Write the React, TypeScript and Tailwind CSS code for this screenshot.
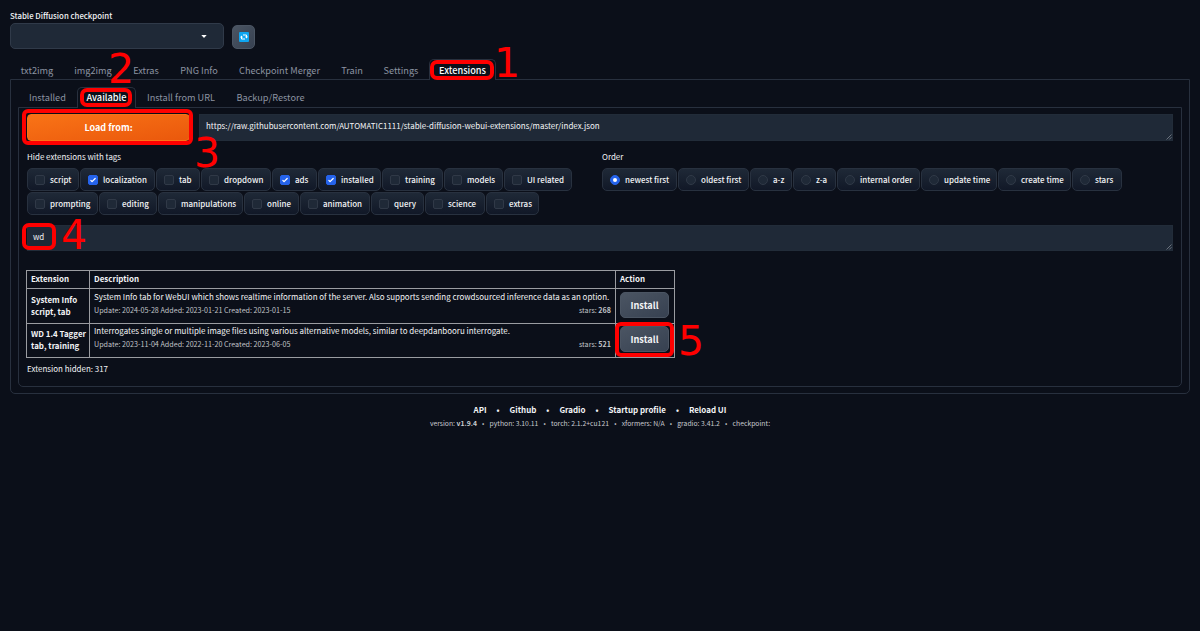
import * as React from "react";
import { clsx } from "clsx";

interface TabItem {
  label: string;
  width: string;
}

interface Option {
  label: string;
  width: string;
  checked?: boolean;
}

const MAIN_TABS: TabItem[] = [
  { label: "txt2img", width: "w-[54px]" },
  { label: "img2img", width: "w-[58px]" },
  { label: "Extras", width: "w-[48px]" },
  { label: "PNG Info", width: "w-[58px]" },
  { label: "Checkpoint Merger", width: "w-[103px]" },
  { label: "Train", width: "w-[42px]" },
  { label: "Settings", width: "w-[56px]" },
  { label: "Extensions", width: "w-[67px]" },
];

const SUB_TABS: TabItem[] = [
  { label: "Installed", width: "w-[59px]" },
  { label: "Available", width: "w-[59px]" },
  { label: "Install from URL", width: "w-[90px]" },
  { label: "Backup/Restore", width: "w-[89px]" },
];

const TAG_ROWS: Option[][] = [
  [
    { label: "script", width: "w-[52px]" },
    { label: "localization", width: "w-[75px]", checked: true },
    { label: "tab", width: "w-[44px]" },
    { label: "dropdown", width: "w-[70px]" },
    { label: "ads", width: "w-[45px]", checked: true },
    { label: "installed", width: "w-[63px]", checked: true },
    { label: "training", width: "w-[61px]" },
    { label: "models", width: "w-[59px]" },
    { label: "UI related", width: "w-[68px]" },
  ],
  [
    { label: "prompting", width: "w-[71px]" },
    { label: "editing", width: "w-[58px]" },
    { label: "manipulations", width: "w-[85px]" },
    { label: "online", width: "w-[55px]" },
    { label: "animation", width: "w-[70px]" },
    { label: "query", width: "w-[53px]" },
    { label: "science", width: "w-[60px]" },
    { label: "extras", width: "w-[53px]" },
  ],
];

const ORDER: Option[] = [
  { label: "newest first", width: "w-[75px]", checked: true },
  { label: "oldest first", width: "w-[71px]" },
  { label: "a-z", width: "w-[42px]" },
  { label: "z-a", width: "w-[43px]" },
  { label: "internal order", width: "w-[83px]" },
  { label: "update time", width: "w-[76px]" },
  { label: "create time", width: "w-[73px]" },
  { label: "stars", width: "w-[50px]" },
];

const EXTENSIONS = [
  {
    name: "System Info",
    tags: "script, tab",
    description:
      "System Info tab for WebUI which shows realtime information of the server. Also supports sending crowdsourced inference data as an option.",
    dates: "Update: 2024-05-28 Added: 2023-01-21 Created: 2023-01-15",
    stars: 268,
  },
  {
    name: "WD 1.4 Tagger",
    tags: "tab, training",
    description:
      "Interrogates single or multiple image files using various alternative models, similar to deepdanbooru interrogate.",
    dates: "Update: 2023-11-04 Added: 2022-11-20 Created: 2023-06-05",
    stars: 521,
  },
];

// Red outlines and step numbers drawn over the page
const OUTLINES = [
  "left-[430px] top-[60px] h-[20px] w-[64px] rounded-[7px]",
  "left-[80px] top-[88px] h-[19px] w-[52px] rounded-[7px]",
  "left-[22px] top-[109px] h-[36px] w-[171px] rounded-[6px]",
  "left-[22px] top-[223px] h-[27px] w-[34px] rounded-[7px]",
  "left-[615px] top-[322px] h-[35px] w-[59px] rounded-[6px]",
];

const STEPS = [
  { n: 1, pos: "left-[494px] top-[43px]" },
  { n: 2, pos: "left-[108px] top-[49px]" },
  { n: 3, pos: "left-[194px] top-[133px]" },
  { n: 4, pos: "left-[61px] top-[215px]" },
  { n: 5, pos: "left-[678px] top-[321px]" },
];

function Tabs({ items, active, className }: { items: TabItem[]; active: string; className?: string }) {
  return (
    <div className={clsx("relative z-10 -mb-px flex h-[21px] text-[9.2px]", className)}>
      {items.map(({ label, width }) => (
        <div
          key={label}
          className={clsx(
            "flex shrink-0 items-center justify-center rounded-t-[5px] border border-b-0",
            width,
            label === active
              ? "border-[#28303e] bg-[#0b0f19] font-medium text-white"
              : "border-transparent text-[#8b93a1]"
          )}
        >
          {label}
        </div>
      ))}
    </div>
  );
}

function Chip({ option, radio = false }: { option: Option; radio?: boolean }) {
  return (
    <div
      className={clsx(
        "flex h-[23px] shrink-0 items-center gap-[5px] rounded-[5px] border border-[#28313f] bg-linear-to-b from-[#1f2937] to-[#111827] pl-[7px] font-medium",
        option.width
      )}
    >
      <span
        className={clsx(
          "flex size-[10px] shrink-0 items-center justify-center border",
          radio ? "rounded-full" : "rounded-[2px]",
          option.checked ? "border-[#2563eb] bg-[#2563eb]" : "border-[#303947] bg-[#1f2937]"
        )}
      >
        {option.checked && radio && <span className="size-[4px] rounded-full bg-white" />}
        {option.checked && !radio && (
          <svg viewBox="0 0 16 16" className="size-[10px] shrink-0" fill="white">
            <path d="M12.2 4.8a1 1 0 0 1 0 1.4l-5 5a1 1 0 0 1-1.4 0l-2-2a1 1 0 0 1 1.4-1.4l1.3 1.3 4.3-4.3a1 1 0 0 1 1.4 0z" />
          </svg>
        )}
      </span>
      <span>{option.label}</span>
    </div>
  );
}

function TextBox({ children, className }: { children: React.ReactNode; className?: string }) {
  return (
    <div
      className={clsx(
        "relative flex items-center border border-[#222c39] bg-[#1f2937] pb-[3px]",
        className
      )}
    >
      {children}
      <svg
        viewBox="0 0 6 6"
        className="absolute right-0 bottom-0 size-[6px]"
        stroke="#8b929c"
        strokeWidth="0.7"
      >
        <path d="M0.5 5.5l5-5M3.2 5.5l2.3-2.3" />
      </svg>
    </div>
  );
}

function InstallButton() {
  return (
    <button className="-mt-[2px] flex h-[26px] w-[49px] items-center justify-center rounded-[5px] border border-[#4b5563] bg-linear-to-br from-[#4b5563] to-[#374151] text-[9.2px] font-bold">
      Install
    </button>
  );
}

function Links({ items, className }: { items: React.ReactNode[]; className?: string }) {
  return (
    <div className={clsx("flex justify-center", className)}>
      {items.map((item, i) => (
        <React.Fragment key={i}>
          {i > 0 && <span>•</span>}
          <span>{item}</span>
        </React.Fragment>
      ))}
    </div>
  );
}

export default function App() {
  return (
    <div className="relative h-[631px] w-[1200px] overflow-hidden bg-[#0b0f19] px-[10px] font-['Noto_Sans_CJK_JP',sans-serif] text-[7.96px] leading-[12px] whitespace-nowrap text-[#f3f4f6]">
      <div className="flex h-[58px] gap-[8px] pt-[10px]">
        <div className="w-[214px]">
          <div className="h-[13px] text-[7.8px] font-medium">Stable Diffusion checkpoint</div>
          <div className="flex h-[26px] items-center justify-end rounded-[5px] border border-[#303a49] bg-[#1f2937] pr-[16px]">
            <svg viewBox="0 0 6 3" className="h-[3px] w-[6px]" fill="white">
              <path d="M0.3 0h5.4L3 3z" />
            </svg>
          </div>
        </div>
        <div className="mt-[15px] flex h-[24px] w-[23px] items-center justify-center rounded-[5px] border border-[#4b5563] bg-linear-to-br from-[#4b5563] to-[#374151]">
          <svg viewBox="0 0 20 20" className="size-[10px]" fill="none" stroke="white" strokeWidth="2">
            <rect width="20" height="20" rx="2" fill="#0ea5f0" stroke="none" />
            <path d="M8 6h7v4M12 14H5v-4" />
            <path d="M12 9h6l-3 4zM2 11h6L5 7z" fill="white" stroke="none" />
          </svg>
        </div>
      </div>

      <Tabs items={MAIN_TABS} active="Extensions" className="mt-px" />

      <div className="h-[315px] rounded-b-[5px] border border-[#28303e] px-[7px] pt-[7px]">
        <Tabs items={SUB_TABS} active="Available" className="[&>div]:pb-[2px]" />

        <div className="flex h-[280px] flex-col rounded-b-[5px] border border-[#28303e] px-[8px] pt-[6px]">
          <div className="flex h-[27px] gap-[9px]">
            <button className="flex w-[163px] items-center justify-center rounded-[4px] border border-[#f97316] bg-linear-to-br from-[#f97316] to-[#ea580c] text-[9px] font-bold text-white">
              Load from:
            </button>
            <TextBox className="flex-1 pl-[6px]">
              https://raw.githubusercontent.com/AUTOMATIC1111/stable-diffusion-webui-extensions/master/index.json
            </TextBox>
          </div>

          <div className="mt-[10px] flex h-[65px]">
            <div className="w-[575px]">
              <div className="h-[17px]">Hide extensions with tags</div>
              {TAG_ROWS.map((row, i) => (
                <div key={i} className="mb-px flex gap-px">
                  {row.map((option) => (
                    <Chip key={option.label} option={option} />
                  ))}
                </div>
              ))}
            </div>
            <div>
              <div className="h-[17px]">Order</div>
              <div className="flex gap-px">
                {ORDER.map((option) => (
                  <Chip key={option.label} option={option} radio />
                ))}
              </div>
            </div>
          </div>

          <TextBox className="mt-[9px] h-[26px] shrink-0 pl-[5px]">wd</TextBox>

          <table className="mt-[19px] -ml-px w-[648px] table-fixed border-collapse text-left [&_td]:border [&_td]:border-[#9a9ca1] [&_td]:p-0 [&_td]:px-[4px] [&_th]:border [&_th]:border-[#9a9ca1] [&_th]:p-0 [&_th]:px-[4px] [&_th]:pb-[2px]">
            <colgroup>
              <col className="w-[63px]" />
              <col className="w-[526px]" />
              <col className="w-[59px]" />
            </colgroup>
            <thead>
              <tr className="h-[18px]">
                <th>Extension</th>
                <th>Description</th>
                <th>Action</th>
              </tr>
            </thead>
            <tbody>
              {EXTENSIONS.map((ext) => (
                <tr key={ext.name} className="h-[34.5px]">
                  <td className="font-bold">
                    {ext.name}
                    <br />
                    {ext.tags}
                  </td>
                  <td>
                    <div className="-mt-[5px]">{ext.description}</div>
                    <div className="flex justify-between pt-px text-[7.17px] text-[#c0c3c8]">
                      <span>{ext.dates}</span>
                      <span>
                        stars: <b>{ext.stars}</b>
                      </span>
                    </div>
                  </td>
                  <td>
                    <InstallButton />
                  </td>
                </tr>
              ))}
            </tbody>
          </table>
          <div className="mt-[5px]">Extension hidden: 317</div>
        </div>
      </div>

      <Links
        className="mt-[10px] gap-[10px] font-bold"
        items={["API", "Github", "Gradio", "Startup profile", "Reload UI"]}
      />
      <Links
        className="mt-px gap-[5.2px] text-[6.8px] text-[#c8cbd0]"
        items={[
          <>
            version: <b>v1.9.4</b>
          </>,
          "python: 3.10.11",
          "torch: 2.1.2+cu121",
          "xformers: N/A",
          "gradio: 3.41.2",
          "checkpoint:",
        ]}
      />

      {OUTLINES.map((box) => (
        <div key={box} className={clsx("absolute z-20 border-4 border-[#ff0000]", box)} />
      ))}
      {STEPS.map(({ n, pos }) => (
        <span
          key={n}
          className={clsx(
            "absolute z-20 font-['DejaVu_Sans',sans-serif] text-[41px] leading-[40px] text-[#ff0000]",
            pos
          )}
        >
          {n}
        </span>
      ))}
    </div>
  );
}
